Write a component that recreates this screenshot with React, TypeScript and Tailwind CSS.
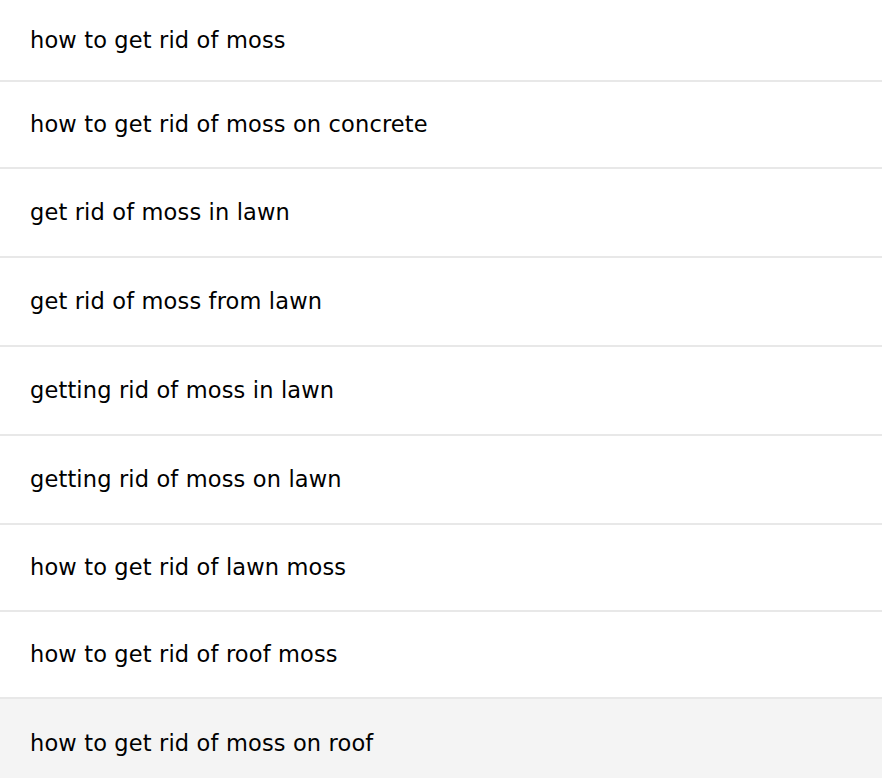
import React from "react";

const items: { t: string; h: string }[] = [
  { t: "how to get rid of moss", h: "h-[82px]" },
  { t: "how to get rid of moss on concrete", h: "h-[87px]" },
  { t: "get rid of moss in lawn", h: "h-[89px]" },
  { t: "get rid of moss from lawn", h: "h-[89px]" },
  { t: "getting rid of moss in lawn", h: "h-[89px]" },
  { t: "getting rid of moss on lawn", h: "h-[89px]" },
  { t: "how to get rid of lawn moss", h: "h-[87px]" },
  { t: "how to get rid of roof moss", h: "h-[87px]" },
  { t: "how to get rid of moss on roof", h: "h-[88px]" },
];

export default function App() {
  return (
    <div className="w-[882px] h-[778px] overflow-hidden bg-white">
      <ul className="flex flex-col">
        {items.map((it, i) => {
          const last = i === items.length - 1;
          return (
            <li
              key={i}
              className={`flex shrink-0 items-center pl-[30px] pt-[1px] text-[22.5px] tracking-[0.15px] text-black ${it.h} ${
                last ? "bg-[#f4f4f4]" : "border-b-2 border-[#e8e8e8]"
              }`}
              style={{ fontFamily: '"DejaVu Sans", sans-serif' }}
            >
              {it.t}
            </li>
          );
        })}
      </ul>
    </div>
  );
}
